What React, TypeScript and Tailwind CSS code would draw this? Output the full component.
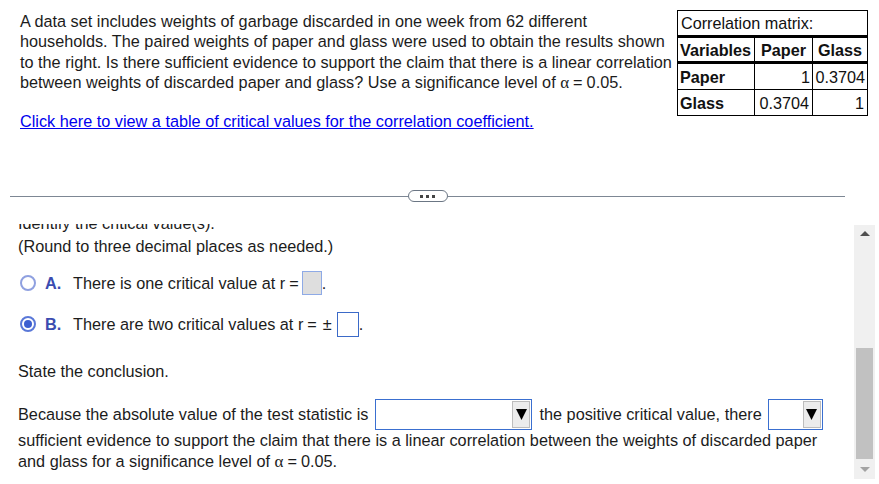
import React from 'react';

const Alpha = () => (
  <>
    <span className="font-['Liberation_Serif',serif] text-[17px]">α</span>
    <span className="mx-[4px]">=</span>
  </>
);

const CorrelationTable = () => (
  <table className="self-start border-collapse border border-black text-[16.2px] leading-[20px] text-[#111]">
    <tbody>
      <tr className="border-b-[3px] border-black">
        <td colSpan={3} className="h-[26px] px-[3px]">Correlation matrix:</td>
      </tr>
      <tr className="border-b-[3px] border-black font-bold">
        <td className="h-[26px] w-[77px] border-r border-black px-[2px]">Variables</td>
        <td className="w-[58px] border-r border-black px-[3px] text-center">Paper</td>
        <td className="w-[55px] px-[3px] text-center">Glass</td>
      </tr>
      <tr className="border-b border-black">
        <td className="h-[27px] border-r border-black px-[2px] font-bold">Paper</td>
        <td className="border-r border-black px-[2px] text-right">1</td>
        <td className="px-[2px] text-right">0.3704</td>
      </tr>
      <tr>
        <td className="h-[26px] border-r border-black px-[2px] font-bold">Glass</td>
        <td className="border-r border-black px-[3px] text-right">0.3704</td>
        <td className="px-[3px] text-right">1</td>
      </tr>
    </tbody>
  </table>
);

const Radio = ({ checked }: { checked?: boolean }) => (
  <span
    className={`flex h-[16px] w-[16px] shrink-0 items-center justify-center rounded-full border-2 ${
      checked ? 'border-[#5a78d8]' : 'border-[#8fa0e0]'
    } bg-white`}
  >
    {checked && <span className="h-[8px] w-[8px] rounded-full bg-[#3d5fd0]" />}
  </span>
);

const Select = ({ width }: { width: string }) => (
  <span className={`flex h-[31px] ${width} shrink-0 items-center justify-end border border-[#3a6fd0] bg-white pr-[1px]`}>
    <span className="flex h-[27px] w-[18px] items-center justify-center border border-[#bdbdbd] bg-[#ececec]">
      <svg width="11" height="12" viewBox="0 0 11 12">
        <polygon points="0,1 11,1 5.5,12" fill="#000" />
      </svg>
    </span>
  </span>
);

const Scrollbar = () => (
  <div className="mt-[1px] flex h-[254px] w-[21px] flex-col bg-[#f0f0f0]">
    <div className="flex h-[17px] items-center justify-center">
      <span className="h-0 w-0 border-x-[5px] border-b-[5px] border-x-transparent border-b-[#505050]" />
    </div>
    <div className="h-[106px]" />
    <div className="mx-[2px] h-[111px] bg-[#c1c1c1]" />
    <div className="flex flex-1 items-center justify-center">
      <span className="h-0 w-0 border-x-[5px] border-t-[5px] border-x-transparent border-t-[#a3a3a3]" />
    </div>
  </div>
);

export default function App() {
  return (
    <div className="h-[484px] w-[879px] overflow-hidden bg-white font-['Liberation_Sans',Arial,sans-serif] text-[16.25px] text-[#1c1c1c]">
      {/* problem statement */}
      <div className="flex h-[190px] items-start pt-[10px]">
        <div className="w-[677px] pl-[20px] pt-[1px]">
          <p className="leading-[20.4px]">
            A data set includes weights of garbage discarded in one week from 62 different
            <br />
            households. The paired weights of paper and glass were used to obtain the results shown
            <br />
            to the right. Is there sufficient evidence to support the claim that there is a linear correlation
            <br />
            between weights of discarded paper and glass? Use a significance level of <Alpha />0.05.
          </p>
          <a className="mt-[17px] block leading-[20px] text-[#0000ee] underline" href="#">
            Click here to view a table of critical values for the correlation coefficient.
          </a>
        </div>
        <CorrelationTable />
      </div>

      {/* divider */}
      <div className="ml-[10px] flex h-[12px] w-[835px] items-center">
        <div className="h-px flex-1 bg-[#7d8794]" />
        <div className="flex h-[12px] w-[40px] items-center justify-center gap-[3px] rounded-full border border-[#6b7684] bg-white">
          <span className="h-[3px] w-[3px] bg-[#444]" />
          <span className="h-[3px] w-[3px] bg-[#444]" />
          <span className="h-[3px] w-[3px] bg-[#444]" />
        </div>
        <div className="h-px flex-1 bg-[#7d8794]" />
      </div>

      {/* answer area */}
      <div className="mt-[22px] flex h-[260px]">
        <div className="w-[854px] overflow-hidden">
          <div className="-mt-[11px] pl-[18px]">
            <div className="h-[20px] leading-[20px]">Identify the critical value(s).</div>
            <div className="mt-[3px] h-[20px] leading-[20px]">(Round to three decimal places as needed.)</div>

            <div className="mt-[15px] flex h-[24px] items-center">
              <span className="ml-[2px]"><Radio /></span>
              <span className="ml-[9px] w-[28px] font-bold text-[#3b4cb0]">A.</span>
              <span>There is one critical value at r</span>
              <span className="ml-[4px]">=</span>
              <span className="ml-[3px] h-[24px] w-[20px] border border-[#8eaae6] bg-[#dedede]" />
              <span>.</span>
            </div>

            <div className="mt-[16px] flex h-[26px] items-center">
              <span className="ml-[2px]"><Radio checked /></span>
              <span className="ml-[9px] w-[28px] font-bold text-[#3b4cb0]">B.</span>
              <span>There are two critical values at r</span>
              <span className="ml-[4px]">=</span>
              <span className="ml-[6px]">±</span>
              <span className="ml-[5px] h-[25px] w-[22px] border border-[#3b6ac8] bg-white" />
              <span>.</span>
            </div>

            <div className="mt-[24px] h-[20px] leading-[20px]">State the conclusion.</div>

            <div className="mt-[17px] flex h-[32px] items-center whitespace-nowrap">
              <span>Because the absolute value of the test statistic is</span>
              <span className="ml-[7px]"><Select width="w-[157px]" /></span>
              <span className="ml-[7px]">the positive critical value, there</span>
              <span className="ml-[6px]"><Select width="w-[55px]" /></span>
            </div>
            <div className="leading-[21px]">
              sufficient evidence to support the claim that there is a linear correlation between the weights of discarded paper
            </div>
            <div className="leading-[21px]">
              and glass for a significance level of <Alpha />0.05.
            </div>
          </div>
        </div>
        <Scrollbar />
      </div>
    </div>
  );
}
